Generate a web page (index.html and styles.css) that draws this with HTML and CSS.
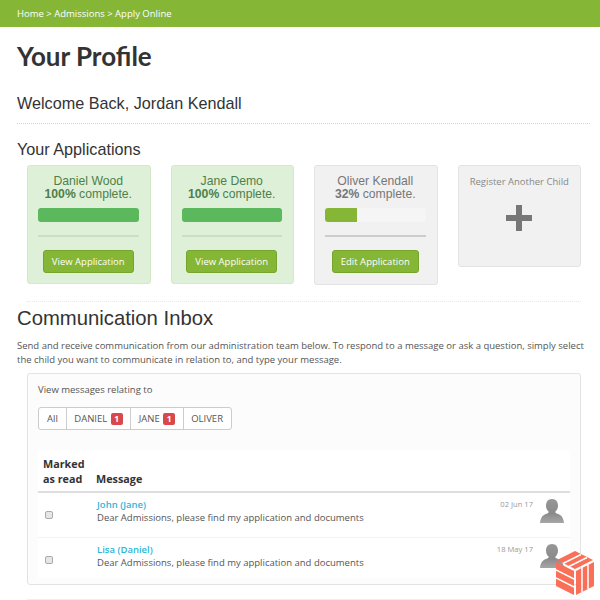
FILE: index.html
```html
<!DOCTYPE html>
<html lang="en">
<head>
    <meta charset="UTF-8">
    <title>Your Profile</title>
    <link rel="stylesheet" href="styles.css">
</head>
<body>
    <div class="crumbs">Home &gt; Admissions &gt; Apply Online</div>
    <div class="page">
        <h1>Your Profile</h1>
        <h2 class="welcome">Welcome Back, Jordan Kendall</h2>
        <hr class="dots">
        <h2 class="apps-title">Your Applications</h2>
        <div class="cards">
            <div class="card card-done">
                <p class="card-name">Daniel Wood<br><b>100%</b> complete.</p>
                <div class="bar"><div class="bar-fill bar-full"></div></div>
                <hr class="card-line">
                <a class="btn">View Application</a>
            </div>
            <div class="card card-done">
                <p class="card-name">Jane Demo<br><b>100%</b> complete.</p>
                <div class="bar"><div class="bar-fill bar-full"></div></div>
                <hr class="card-line">
                <a class="btn">View Application</a>
            </div>
            <div class="card card-open">
                <p class="card-name">Oliver Kendall<br><b>32%</b> complete.</p>
                <div class="bar"><div class="bar-fill" style="width:32%"></div></div>
                <hr class="card-line">
                <a class="btn">Edit Application</a>
            </div>
            <div class="card card-open card-add">
                <p class="add-label">Register Another Child</p>
                <svg class="add-icon" width="26" height="26" viewBox="0 0 26 26"><path d="M10 0h6v10h10v6H16v10h-6V16H0v-6h10z" fill="#777"/></svg>
            </div>
        </div>
        <hr class="dots dots-inner">
        <h2 class="inbox-title">Communication Inbox</h2>
        <p class="intro">Send and receive communication from our administration team below. To respond to a message or ask a question, simply select the child you want to communicate in relation to, and type your message.</p>
        <div class="panel">
            <p class="panel-label">View messages relating to</p>
            <div class="tabs">
                <a class="tab">All</a>
                <a class="tab">DANIEL <span class="count">1</span></a>
                <a class="tab">JANE <span class="count">1</span></a>
                <a class="tab">OLIVER</a>
            </div>
            <table class="messages">
                <thead>
                    <tr>
                        <th class="col-read">Marked<br>as read</th>
                        <th>Message</th>
                        <th class="col-date"></th>
                    </tr>
                </thead>
                <tbody>
                    <tr>
                        <td class="col-read"><span class="check"></span></td>
                        <td class="col-text"><a class="sender">John (Jane)</a><br>Dear Admissions, please find my application and documents</td>
                        <td class="col-date">
                            <div class="date-wrap">
                                <span class="date">02 Jun 17</span>
                                <svg class="avatar" width="24" height="24" viewBox="0 0 26 26"><defs><linearGradient id="av1" x1="0" y1="0" x2="0" y2="1"><stop offset="0" stop-color="#969696"/><stop offset="0.6" stop-color="#8a8a8a"/><stop offset="1" stop-color="#a6a6a6"/></linearGradient></defs><path d="M13 0c4 0 6.500 3 6.500 7.200 0 2.800-1.200 5.200-3 6.600 0 1 .5 1.500 1.800 2 3.500 1.200 6.900 2.800 7.700 10.200H0c.8-7.400 4.200-9 7.700-10.200 1.300-.5 1.800-1 1.800-2-1.800-1.400-3-3.800-3-6.600C6.500 3 9 0 13 0z" fill="url(#av1)"/></svg>
                            </div>
                        </td>
                    </tr>
                    <tr>
                        <td class="col-read"><span class="check"></span></td>
                        <td class="col-text"><a class="sender">Lisa (Daniel)</a><br>Dear Admissions, please find my application and documents</td>
                        <td class="col-date">
                            <div class="date-wrap">
                                <span class="date">18 May 17</span>
                                <svg class="avatar" width="24" height="24" viewBox="0 0 26 26"><path d="M13 0c4 0 6.500 3 6.500 7.200 0 2.800-1.200 5.200-3 6.600 0 1 .5 1.500 1.800 2 3.500 1.200 6.900 2.800 7.700 10.200H0c.8-7.400 4.200-9 7.700-10.200 1.300-.5 1.800-1 1.800-2-1.800-1.400-3-3.800-3-6.600C6.500 3 9 0 13 0z" fill="url(#av1)"/></svg>
                            </div>
                        </td>
                    </tr>
                </tbody>
            </table>
        </div>
        <div class="panel-next"></div>
    </div>
    <svg class="brand" width="38" height="44" viewBox="0 0 38 44">
        <path d="M19 0l18 9-18 9L1 9z" fill="#f96f58"/>
        <path d="M0 11l18 9v24L0 35z" fill="#f96f58"/>
        <path d="M20 20l18-9v24l-18 9z" fill="#f96f58"/>
        <g stroke="#fff" stroke-width="1.500" fill="none">
            <path d="M7 12.500L25 3.500M13 15.500L31 6.500"/>
            <path d="M0 19l18 9M0 27l18 9"/>
            <path d="M26 16.500V41M32 13.500V38"/>
        </g>
    </svg>
</body>
</html>
```

FILE: styles.css
```css
html, body {
    height: 600px;
    overflow: hidden;
}
body {
    font-family: 'Open Sans', sans-serif;
    font-size: 9.5px;
    margin: 0;
    background-color: #ffffff;
    color: #555555;
}
.crumbs {
    height: 27px;
    line-height: 27px;
    padding-left: 17px;
    background-color: #85b635;
    color: #ffffff;
}
.page {
    padding: 0 10px 0 17px;
}
h1 {
    font-family: 'Lato', sans-serif;
    font-size: 26px;
    font-weight: 700;
    line-height: 32px;
    color: #333333;
    margin: 0;
    padding-top: 13px;
}
h2 {
    font-family: 'Liberation Sans', sans-serif;
    font-weight: 400;
    color: #333333;
    margin: 0;
}
.welcome {
    font-size: 16.2px;
    line-height: 20px;
    margin-top: 21px;
}
.dots {
    border: 0;
    border-top: 1px dotted #d2d2d2;
    margin: 10px 0 0 0;
}
.apps-title {
    font-size: 16.2px;
    line-height: 20px;
    margin-top: 15px;
}
.cards {
    display: flex;
    align-items: flex-start;
    gap: 20px;
    margin: 6px 0 0 10px;
}
.card {
    box-sizing: border-box;
    width: 123.5px;
    padding: 9px 11px 0 10px;
    border-radius: 3px;
    text-align: center;
}
.card-done {
    height: 119px;
    background-color: #dff0d8;
    border: 1px solid #d6e9c6;
    color: #4d8049;
}
.card-open {
    height: 120px;
    background-color: #f1f1f1;
    border: 1px solid #e3e3e3;
    color: #777777;
}
.card-name {
    font-family: 'Liberation Sans', sans-serif;
    font-size: 12.2px;
    line-height: 13px;
    margin: 0;
}
.bar {
    height: 14px;
    margin-top: 7px;
    background-color: #f5f5f5;
    border-radius: 3px;
    overflow: hidden;
}
.bar-fill {
    height: 100%;
    background-color: #85b635;
}
.bar-full {
    background-color: #5cb85c;
}
.card-line {
    border: 0;
    border-top: 2px solid #cfdcc8;
    margin: 13px 0 0;
}
.card-open .card-line {
    border-top-color: #cccccc;
}
.btn {
    display: inline-block;
    margin-top: 13px;
    padding: 0 8px;
    height: 23px;
    line-height: 21px;
    box-sizing: border-box;
    background-color: #85b635;
    border: 1px solid #76a52c;
    border-radius: 3px;
    color: #ffffff;
}
.card.card-add {
    height: 102px;
    padding: 9px 10px 0;
}
.add-label {
    margin: 0;
    line-height: 14px;
    color: #888888;
}
.add-icon {
    display: block;
    margin: 16px auto 0;
}
.dots-inner {
    margin: 16px 9px 0 10px;
    border-top-color: #e8e8e8;
}
.inbox-title {
    font-size: 20.3px;
    line-height: 26px;
    margin-top: 3px;
}
.intro {
    margin: 8px 0 0;
    line-height: 14px;
}
.panel {
    box-sizing: border-box;
    width: 554px;
    height: 212px;
    margin: 6px 0 0 10px;
    padding: 9px 10px 0;
    background-color: #fcfcfc;
    border: 1px solid #e3e3e3;
    border-radius: 3px;
}
.panel-label {
    margin: 0;
    line-height: 14px;
}
.tabs {
    display: inline-flex;
    margin-top: 10px;
    background-color: #ffffff;
    border: 1px solid #cccccc;
    border-radius: 3px;
}
.tab {
    padding: 0 7.5px;
    line-height: 21px;
    border-left: 1px solid #cccccc;
}
.tab:first-child {
    border-left: 0;
    padding: 0 8px;
}
.count {
    display: inline-block;
    width: 12px;
    margin-left: 1px;
    text-align: center;
    line-height: 12px;
    background-color: #d9484d;
    border-radius: 2px;
    color: #ffffff;
    font-size: 8.5px;
    font-weight: 700;
}
.messages {
    width: 100%;
    table-layout: fixed;
    margin-top: 20px;
    border-collapse: collapse;
    background-color: #ffffff;
}
.messages th {
    text-align: left;
    vertical-align: bottom;
    padding: 6px 5px 5px;
    font-size: 10.8px;
    font-weight: 700;
    line-height: 15px;
    color: #333333;
    border-bottom: 2px solid #dddddd;
}
.messages td {
    padding: 5px 5px 0;
    line-height: 13px;
    height: 39px;
    border-bottom: 1px solid #f3f3f3;
    vertical-align: top;
}
.messages tr:last-child td {
    border-bottom: 0;
    height: 35px;
}
.messages .col-read {
    width: 43px;
}
.messages .col-text {
    padding-left: 6px;
}
.messages .col-date {
    width: 90px;
}
.check {
    display: block;
    box-sizing: border-box;
    width: 8px;
    height: 8px;
    margin: 13px 0 0 2px;
    background-color: #e6e6e6;
    border: 1px solid #aaaaaa;
    border-radius: 2px;
}
.sender {
    color: #31b5d8;
    font-weight: 600;
}
.date-wrap {
    display: flex;
    justify-content: flex-end;
    align-items: flex-start;
    gap: 7px;
    padding-right: 1px;
}
.date {
    font-size: 7.6px;
    color: #999999;
}
.avatar {
    margin-top: 1px;
}
.panel-next {
    height: 20px;
    margin: 14px 0 0 10px;
    width: 554px;
    border-top: 1px solid #eeeeee;
}
.brand {
    position: absolute;
    left: 556px;
    top: 551px;
}
```
